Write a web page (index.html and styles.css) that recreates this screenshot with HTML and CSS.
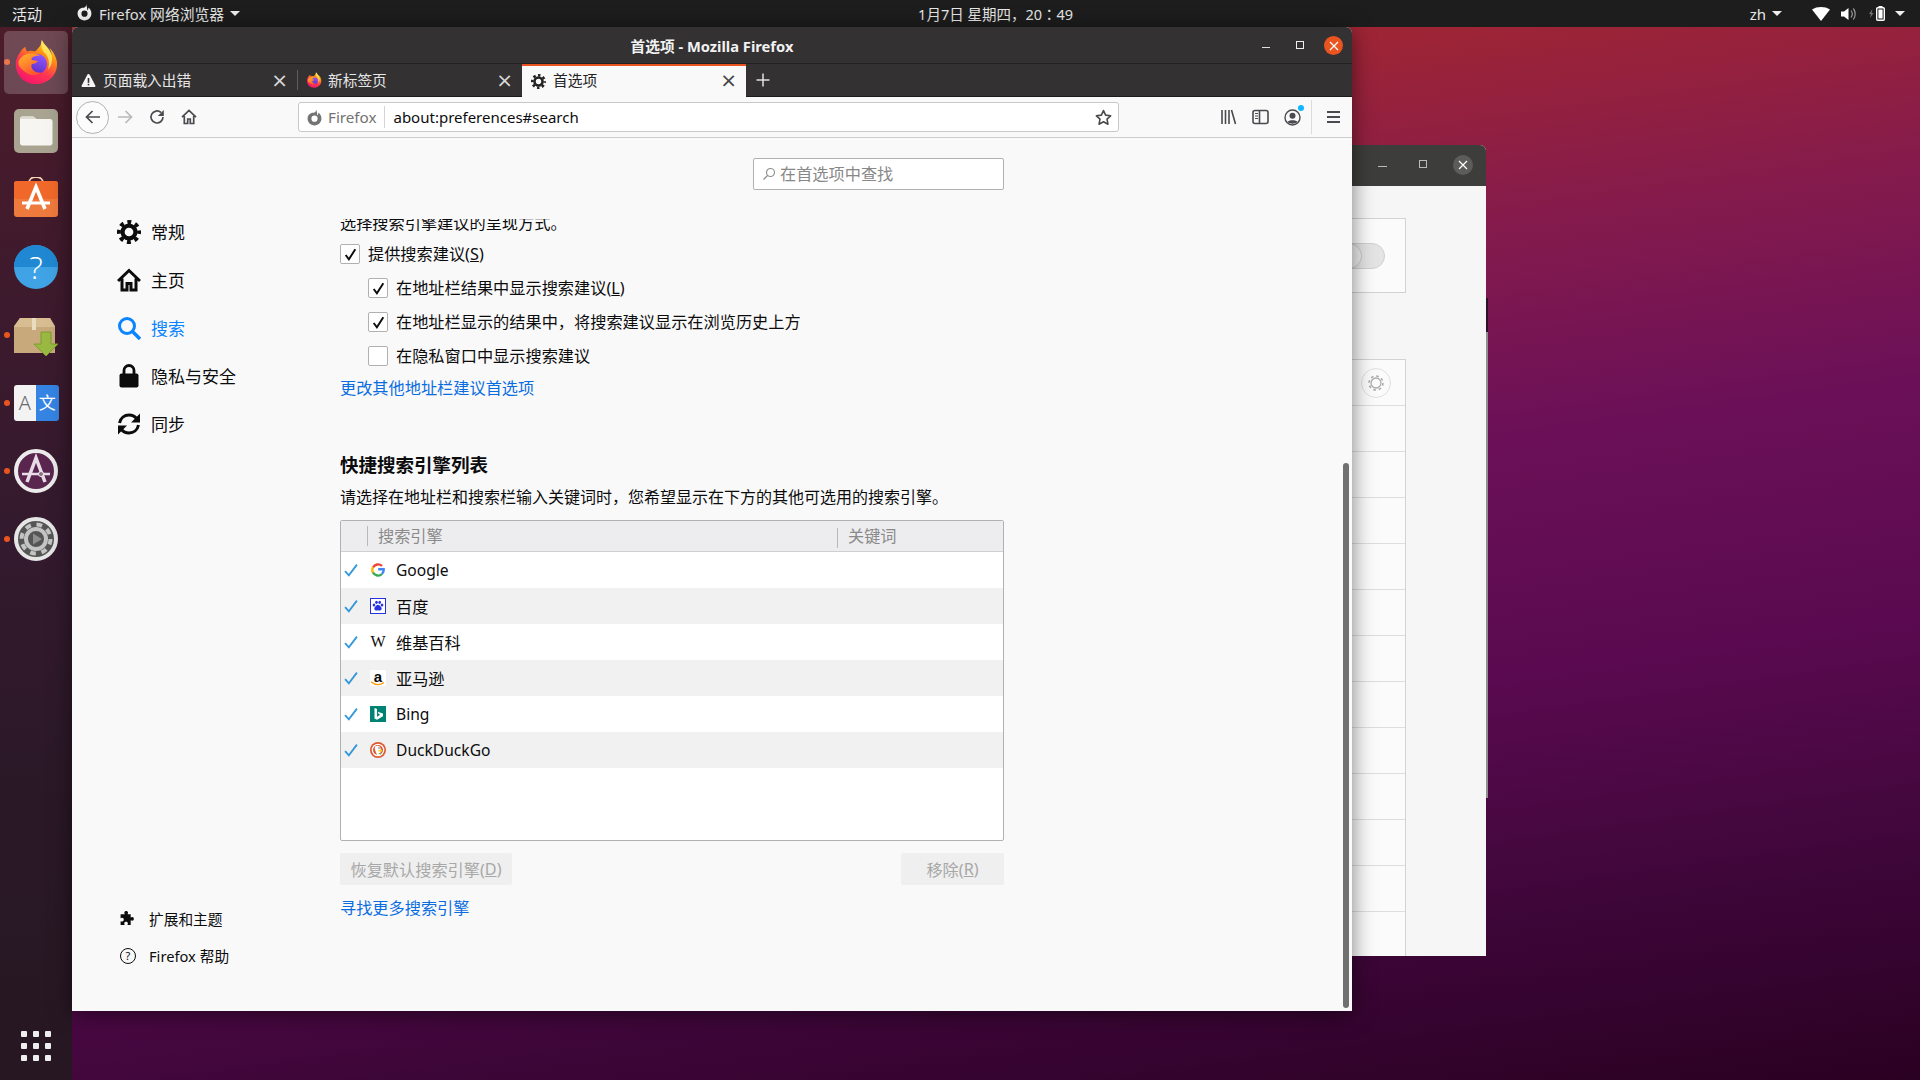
FILE: index.html
```html
<!DOCTYPE html>
<html lang="zh-CN">

<head>
    <meta charset="UTF-8">
    <title>首选项 - Mozilla Firefox</title>
    <link rel="stylesheet" href="styles.css">
</head>

<body>
    <svg class="defs" width="0" height="0">
        <defs>
            <linearGradient id="fxBody" x1="0.85" y1="0" x2="0.3" y2="1">
                <stop offset="0" stop-color="#fff44f" />
                <stop offset="0.3" stop-color="#ff980e" />
                <stop offset="0.65" stop-color="#ff3750" />
                <stop offset="1" stop-color="#f5156c" />
            </linearGradient>
            <linearGradient id="fxGlobe" x1="0.7" y1="0" x2="0.3" y2="1">
                <stop offset="0" stop-color="#9059ff" />
                <stop offset="1" stop-color="#5b2cc4" />
            </linearGradient>
            <linearGradient id="fxFold" x1="0.2" y1="0" x2="0.8" y2="1">
                <stop offset="0" stop-color="#ffb02a" />
                <stop offset="1" stop-color="#ff4a2e" />
            </linearGradient>
            <symbol id="fxLogo" viewBox="0 0 48 48">
                <path fill="url(#fxBody)" d="M44 18c-1-3-3-6-6-9 1.500 3 2.500 6 2.500 8C38 10 33 7 30 1c0 6-4 9-7 12-3-1-6-1-8 0-1-1-2-2-2-5-3 2-5 5-5 5C5 17 3 21 3 26c0 12 9 21 21 21s22-9 22-21c0-3-1-6-2-8z" />
                <circle cx="25" cy="26" r="10.500" fill="url(#fxGlobe)" />
                <path fill="#fff36e" opacity=".75" d="M30 1c3 6 9 9 10.500 16 1 5 0 11-4 15 2-7 1-13-3-17-3-3-5-8-3.500-14z" />
                <path fill="url(#fxFold)" d="M6 23c2-5 7-8 13-8 4 0 8 1 10 3-3-1-7 0-9 1.500-1 1-1 2 0 2.500l6 1c-1 2-4 3-6 3-1 0-1 3 0 5 2 3 6 5 11 4-7 4-15 3-20-2-4-3-6-6-5-10z" />
            </symbol>
            <symbol id="gear" viewBox="0 0 16 16">
                <circle cx="8" cy="8" r="4.300" fill="none" stroke="currentColor" stroke-width="2.800" />
                <circle cx="8" cy="8" r="6.700" fill="none" stroke="currentColor" stroke-width="2.600" stroke-dasharray="2.630 2.630" stroke-dashoffset="1.300" />
            </symbol>
            <symbol id="fxMono" viewBox="0 0 16 16">
                <path fill="currentColor" d="M9.500 0c.5 2-1 3-2 3.600C4 3.300 1.500 5.800 1.500 9c0 3.600 2.900 6.500 6.500 6.500s6.500-2.900 6.500-6.500c0-2.500-1.200-4.500-3-5.600.3 1.400-.1 2.300-.7 2.700C10.600 4 10 2 9.500 0zM8 6.200A2.900 2.900 0 1 1 8 12a2.900 2.900 0 0 1 0-5.800z" />
            </symbol>
            <symbol id="okMark" viewBox="0 0 14 14">
                <path fill="none" stroke="#0c0c0d" stroke-width="1.800" d="M2.500 7.500 5.500 11.500 11.500 2" />
            </symbol>
            <symbol id="tickMark" viewBox="0 0 13 13">
                <path fill="none" stroke="#3498db" stroke-width="1.700" d="M1 7.500 4.500 11.500 12 1.500" />
            </symbol>
        </defs>
    </svg>

    <header class="topbar">
        <span class="activities">活动</span>
        <svg class="app-icon"><use href="#fxMono" /></svg>
        <span class="app-name">Firefox 网络浏览器</span>
        <i class="caret"></i>
        <span class="clock">1月7日 星期四，20<span class="colon" lang="zh-TW">：</span>49</span>
        <div class="status">
            <span class="lang">zh</span>
            <i class="caret"></i>
            <svg class="wifi" width="18" height="14" viewBox="0 0 18 14"><path fill="#fff" d="M0 2.500C5-.8 13-.8 18 2.500L9 14z" /></svg>
            <svg class="volume" width="15" height="14" viewBox="0 0 15 14"><path fill="#fff" d="M0 4.500h3L7.500 1v12L3 9.500H0z" /><path fill="none" stroke="#999" stroke-width="1.200" d="M10 3.500c1.500 2 1.500 5 0 7M12.300 1.500c2.500 3 2.500 8 0 11" /></svg>
            <svg class="battery" width="16" height="15" viewBox="0 0 16 15"><path fill="#777" d="M3.500 3 0 8h2l-1 4 3.500-5h-2z" /><rect x="7.700" y="1.700" width="7.600" height="12.600" rx="1" fill="none" stroke="#fff" stroke-width="1.400" /><rect x="9.500" y="0" width="4" height="2" fill="#fff" /><rect x="9.400" y="3.500" width="4.200" height="9" fill="#fff" /></svg>
            <i class="caret caret-end"></i>
        </div>
    </header>

    <nav class="dock">
        <div class="dock-item running active"><svg width="46" height="46"><use href="#fxLogo" /></svg></div>
        <div class="dock-item">
            <svg width="44" height="44" viewBox="0 0 44 44">
                <rect x="0" y="0" width="44" height="44" rx="5" fill="#a8a491" />
                <path fill="#f7f5f1" d="M6 10c0-1.500 1-2.500 2.500-2.500h10c1.500 0 2.500 1.500 4 2.500H36c1.500 0 2.500 1 2.500 2.500V34c0 1.500-1 2.500-2.500 2.500H8.500C7 36.500 6 35.500 6 34z" />
                <path fill="#dedbd3" d="M6 10c0-1.500 1-2.500 2.500-2.500h10c1.500 0 2.500 1.500 4 2.500z" />
            </svg>
        </div>
        <div class="dock-item">
            <svg width="44" height="44" viewBox="0 0 44 44">
                <path fill="none" stroke="#f6d3b5" stroke-width="1.800" d="M15 6c0-8 14-8 14 0" />
                <rect x="0" y="4" width="44" height="36" rx="3" fill="#ef7a3d" />
                <rect x="0" y="4" width="44" height="18" rx="3" fill="#f0692a" />
                <path fill="none" stroke="#fff" stroke-width="3.600" d="M13 32 22 10l9 22" />
                <path fill="none" stroke="#fff" stroke-width="3" d="M8 26h28" />
            </svg>
        </div>
        <div class="dock-item">
            <svg width="44" height="44" viewBox="0 0 44 44">
                <circle cx="22" cy="22" r="22" fill="#3fa3e5" />
                <path fill="#2088d2" d="M0 22a22 22 0 0 1 44 0z" />
                <text class="help-mark" x="22" y="34" text-anchor="middle">?</text>
            </svg>
        </div>
        <div class="dock-item running">
            <svg width="46" height="44" viewBox="0 0 46 44">
                <g transform="translate(0 3)">
                    <path fill="#c7a97c" d="M1 37V10l6-8h30l5 8v27z" />
                    <path fill="#d8bd92" d="M1 11l6-9h30l5 9z" />
                    <rect x="19" y="2" width="4" height="12" fill="#eadcc0" />
                    <path fill="#99b943" stroke="#7d9c2f" d="M28 16h10v12h7L33 40 21 28h7z" />
                </g>
            </svg>
        </div>
        <div class="dock-item running">
            <div class="translate">
                <span class="tr-a">A</span>
                <span class="tr-b">文</span>
            </div>
        </div>
        <div class="dock-item running">
            <svg width="44" height="44" viewBox="0 0 44 44">
                <circle cx="22" cy="22" r="20" fill="#5a2650" stroke="#ececec" stroke-width="4" />
                <path fill="none" stroke="#e8dce6" stroke-width="3.500" d="M13 33 22 9l9 24" />
                <path fill="none" stroke="#e8dce6" stroke-width="2.500" d="M8 25h28" />
                <circle cx="27" cy="25" r="2.500" fill="#8a6a86" stroke="#eee" />
            </svg>
        </div>
        <div class="dock-item running">
            <svg width="44" height="44" viewBox="0 0 44 44">
                <circle cx="22" cy="22" r="20" fill="#555" stroke="#e6e6e6" stroke-width="4" />
                <circle cx="22" cy="22" r="10" fill="none" stroke="#c4c4c4" stroke-width="4" />
                <circle cx="22" cy="22" r="14.500" fill="none" stroke="#c4c4c4" stroke-width="4" stroke-dasharray="5.700 5.700" />
                <path fill="#8e8e8e" d="M19 16.500 28 22l-9 5.500z" />
            </svg>
        </div>
        <div class="dock-apps">
            <i></i><i></i><i></i><i></i><i></i><i></i><i></i><i></i><i></i>
        </div>
    </nav>

    <section class="bg-window">
        <div class="bg-title">
            <span class="ctl-min"></span>
            <span class="ctl-max"></span>
            <span class="ctl-close">
                <svg width="10" height="10" viewBox="0 0 10 10"><path stroke="#fff" stroke-width="1.200" d="M1 1l8 8M9 1 1 9" /></svg>
            </span>
        </div>
        <div class="bg-body">
            <div class="bg-panel bg-switch-panel">
                <div class="bg-switch"><i></i></div>
            </div>
            <div class="bg-panel bg-list">
                <div class="bg-row bg-row-head">
                    <span class="bg-gear">
                        <svg width="18" height="18" viewBox="0 0 18 18"><circle cx="9" cy="9" r="5" fill="none" stroke="#adadad" stroke-width="1.300" /><circle cx="9" cy="9" r="7" fill="none" stroke="#adadad" stroke-width="1.600" stroke-dasharray="2.700 2.800" /></svg>
                    </span>
                </div>
                <div class="bg-row"></div>
                <div class="bg-row"></div>
                <div class="bg-row"></div>
                <div class="bg-row"></div>
                <div class="bg-row"></div>
                <div class="bg-row"></div>
                <div class="bg-row"></div>
                <div class="bg-row"></div>
                <div class="bg-row"></div>
                <div class="bg-row"></div>
                <div class="bg-row"></div>
                <div class="bg-row"></div>
            </div>
        </div>
    </section>
    <div class="bg-edge"></div>

    <main class="ff-window">
        <div class="ff-title">
            <span class="ff-title-text">首选项 - Mozilla Firefox</span>
            <div class="ff-controls">
                <span class="ff-min"></span>
                <span class="ff-max"></span>
                <span class="ff-close">
                    <svg width="10" height="10" viewBox="0 0 10 10"><path stroke="#fff" stroke-width="1.200" d="M1 1l8 8M9 1 1 9" /></svg>
                </span>
            </div>
        </div>

        <div class="tabs">
            <div class="tab">
                <svg class="tab-icon" width="15" height="15" viewBox="0 0 15 15"><path fill="#f5f5f5" d="M7.500 1c.5 0 .9.300 1.200.800l5.600 10.700c.4.800-.1 1.500-1 1.500H1.700c-.9 0-1.400-.7-1-1.500L6.300 1.800C6.600 1.300 7 1 7.500 1z" /><rect x="6.700" y="5" width="1.600" height="4.800" fill="#333" /><rect x="6.700" y="10.800" width="1.600" height="1.600" fill="#333" /></svg>
                <span class="tab-label">页面载入出错</span>
                <span class="tab-close">×</span>
            </div>
            <div class="tab tab-second">
                <svg class="tab-icon" width="16" height="16"><use href="#fxLogo" /></svg>
                <span class="tab-label">新标签页</span>
                <span class="tab-close">×</span>
            </div>
            <div class="tab tab-active">
                <svg class="tab-icon" width="15" height="15"><use href="#gear" /></svg>
                <span class="tab-label">首选项</span>
                <span class="tab-close">×</span>
            </div>
            <svg class="tab-new" width="34" height="32" viewBox="0 0 32 32"><path stroke="#e0e0e0" stroke-width="1.500" d="M16 9.500v13M9.500 16h13" /></svg>
        </div>

        <div class="toolbar">
            <span class="tool-back">
                <svg width="18" height="18" viewBox="0 0 18 18"><path fill="none" stroke="#4a4a4f" stroke-width="1.700" d="M16 9H3M8.500 3 2.500 9l6 6" /></svg>
            </span>
            <span class="tool-btn">
                <svg width="18" height="18" viewBox="0 0 18 18"><path fill="none" stroke="#b9b9bb" stroke-width="1.700" d="M2 9h13M9.500 3l6 6-6 6" /></svg>
            </span>
            <span class="tool-btn">
                <svg width="16" height="16" viewBox="0 0 16 16"><path fill="none" stroke="#4a4a4f" stroke-width="1.700" d="M14 8a6 6 0 1 1-2-4.500" /><path fill="#4a4a4f" d="M14.800 1v6h-6z" /></svg>
            </span>
            <span class="tool-btn">
                <svg width="16" height="16" viewBox="0 0 16 16"><path fill="none" stroke="#4a4a4f" stroke-width="1.700" d="M1 8.200 8 1.500l7 6.700M3.300 7v7.500h3.400V10h2.600v4.500h3.400V7" /></svg>
            </span>
            <div class="urlbar">
                <span class="identity">
                    <svg width="17" height="17"><use href="#fxMono" /></svg>
                    Firefox
                </span>
                <span class="url">about:preferences#search</span>
                <svg class="star" width="17" height="17" viewBox="0 0 16 16"><path fill="none" stroke="#4a4a4f" stroke-width="1.500" stroke-linejoin="round" d="M8 1.500l2 4.300 4.700.6-3.400 3.200.9 4.700L8 12l-4.200 2.300.9-4.700L1.300 6.400 6 5.800z" /></svg>
            </div>
            <span class="tool-btn tool-library">
                <svg width="17" height="16" viewBox="0 0 17 16"><path stroke="#4a4a4f" stroke-width="1.600" d="M2 1v14M5.500 1v14M9 1v14M11.500 1l4 14" /></svg>
            </span>
            <span class="tool-btn">
                <svg width="17" height="16" viewBox="0 0 17 16"><rect x="1" y="1.500" width="15" height="13" rx="2" fill="none" stroke="#4a4a4f" stroke-width="1.600" /><path stroke="#4a4a4f" stroke-width="1.600" d="M7.500 1.500v13" /><path stroke="#4a4a4f" d="M3 4.500h3M3 7h3M3 9.500h3" /></svg>
            </span>
            <span class="tool-btn tool-account">
                <svg width="17" height="17" viewBox="0 0 17 17"><circle cx="8.500" cy="8.500" r="7.500" fill="none" stroke="#4a4a4f" stroke-width="1.400" /><circle cx="8.500" cy="6.800" r="3" fill="#4a4a4f" /><path fill="#4a4a4f" d="M3.500 13c1-2.500 9-2.500 10 0-2.500 2.200-7.500 2.200-10 0z" /></svg>
                <i class="account-dot"></i>
            </span>
            <span class="tool-sep"></span>
            <span class="tool-btn tool-menu"><i></i><i></i><i></i></span>
        </div>

        <div class="prefs">
            <aside class="side">
                <div class="side-main">
                    <div class="side-item">
                        <svg class="side-icon"><use href="#gear" /></svg>
                        <span>常规</span>
                    </div>
                    <div class="side-item">
                        <svg class="side-icon" viewBox="0 0 24 24"><path fill="none" stroke="#0c0c0d" stroke-width="3" d="M1 13 12 2.500 23 13M5 10.500v11.500h5v-6.500h4V22h5V10.500" /></svg>
                        <span>主页</span>
                    </div>
                    <div class="side-item side-current">
                        <svg class="side-icon" viewBox="0 0 24 24"><circle cx="10" cy="10" r="7.500" fill="none" stroke="#0a84ff" stroke-width="3" /><path stroke="#0a84ff" stroke-width="3.400" d="M15.500 15.500l7.500 7.500" /></svg>
                        <span>搜索</span>
                    </div>
                    <div class="side-item">
                        <svg class="side-icon" viewBox="0 0 24 24"><path fill="none" stroke="#0c0c0d" stroke-width="2.800" d="M7 11V6.500a5 5 0 0 1 10 0V11" /><rect x="2.500" y="9.500" width="19" height="14" rx="2" fill="#0c0c0d" /></svg>
                        <span>隐私与安全</span>
                    </div>
                    <div class="side-item">
                        <svg class="side-icon" viewBox="0 0 24 24"><path fill="none" stroke="#0c0c0d" stroke-width="3" d="M2.500 11C3.500 6 7.500 3 12 3c3.200 0 6 1.500 7.500 3.500M21.500 13c-1 5-5 8-9.500 8-3.200 0-6-1.500-7.500-3.500" /><path fill="#0c0c0d" d="M23 1.500v9h-9zM1 22.500v-9h9z" /></svg>
                        <span>同步</span>
                    </div>
                </div>
                <div class="side-foot">
                    <div class="foot-item">
                        <svg width="16" height="16" viewBox="0 0 16 16"><path fill="#0c0c0d" d="M5 2.500c0-2 3.500-2 3.500 0 0 .6-.4 1-.4 1.500H11v3c.5 0 .9-.4 1.500-.4 2 0 2 3.500 0 3.500-.6 0-1-.4-1.500-.4V14H8c0-.5.4-.9.400-1.500 0-2-3.500-2-3.500 0 0 .6.400 1 .400 1.500H1.500v-3.500c.5 0 .9.400 1.500.4 2 0 2-3.500 0-3.500-.6 0-1 .4-1.500.4V4h3.900c0-.5-.4-.9-.4-1.500z" /></svg>
                        <span>扩展和主题</span>
                    </div>
                    <div class="foot-item">
                        <span class="help-ring">?</span>
                        <span>Firefox 帮助</span>
                    </div>
                </div>
            </aside>

            <div class="pane">
                <div class="pref-search">
                    <svg width="14" height="14" viewBox="0 0 14 14"><circle cx="8.500" cy="5.500" r="4" fill="none" stroke="#8f8f8f" stroke-width="1.200" /><path stroke="#8f8f8f" stroke-width="1.200" d="M5.500 8.500 1.500 12.500" /></svg>
                    <span>在首选项中查找</span>
                </div>

                <div class="pane-scroll">
                    <p class="clipped-line">选择搜索引擎建议的呈现方式。</p>

                    <label class="check-row">
                        <span class="box"><svg width="15" height="15"><use href="#okMark" /></svg></span>
                        <span class="check-text">提供搜索建议(<u>S</u>)</span>
                    </label>
                    <label class="check-row indent">
                        <span class="box"><svg width="15" height="15"><use href="#okMark" /></svg></span>
                        <span class="check-text">在地址栏结果中显示搜索建议(<u>L</u>)</span>
                    </label>
                    <label class="check-row indent">
                        <span class="box"><svg width="15" height="15"><use href="#okMark" /></svg></span>
                        <span class="check-text">在地址栏显示的结果中，将搜索建议显示在浏览历史上方</span>
                    </label>
                    <label class="check-row indent">
                        <span class="box"></span>
                        <span class="check-text">在隐私窗口中显示搜索建议</span>
                    </label>

                    <a class="link link-first">更改其他地址栏建议首选项</a>

                    <h2 class="engines-title">快捷搜索引擎列表</h2>
                    <p class="engines-desc">请选择在地址栏和搜索栏输入关键词时，您希望显示在下方的其他可选用的搜索引擎。</p>

                    <div class="engines">
                        <div class="engines-head">
                            <span class="col-name">搜索引擎</span>
                            <span class="col-key">关键词</span>
                        </div>
                        <div class="engine">
                            <svg class="tick" width="14" height="14"><use href="#tickMark" /></svg>
                            <svg class="fav" width="16" height="16" viewBox="0 0 16 16">
                                <path fill="none" stroke="#ea4335" stroke-width="2.400" d="M3 5.500A5.700 5.700 0 0 1 12 4" />
                                <path fill="none" stroke="#fbbc05" stroke-width="2.400" d="M3 5.200a5.700 5.700 0 0 0 0 5.600" />
                                <path fill="none" stroke="#34a853" stroke-width="2.400" d="M3 10.500a5.700 5.700 0 0 0 9 1.500" />
                                <path fill="none" stroke="#4285f4" stroke-width="2.400" d="M12 12a5.700 5.700 0 0 0 1.700-4.800H8.200" />
                            </svg>
                            <span class="latin">Google</span>
                        </div>
                        <div class="engine">
                            <svg class="tick" width="14" height="14"><use href="#tickMark" /></svg>
                            <svg class="fav" width="16" height="16" viewBox="0 0 16 16">
                                <rect x=".5" y=".5" width="15" height="15" fill="#fff" stroke="#2932e1" />
                                <g fill="#2932e1">
                                    <ellipse cx="4" cy="7" rx="1.300" ry="1.600" />
                                    <ellipse cx="6.500" cy="4.300" rx="1.300" ry="1.600" />
                                    <ellipse cx="9.700" cy="4.300" rx="1.300" ry="1.600" />
                                    <ellipse cx="12" cy="7" rx="1.300" ry="1.600" />
                                    <path d="M8 6.800c1.500 0 2 1.300 3 2.300 1 1 1 3.400-1 3.400-.8 0-1.300-.3-2-.3s-1.200.3-2 .3c-2 0-2-2.400-1-3.400s1.500-2.300 3-2.300z" />
                                </g>
                            </svg>
                            <span class="cjk">百度</span>
                        </div>
                        <div class="engine">
                            <svg class="tick" width="14" height="14"><use href="#tickMark" /></svg>
                            <span class="fav fav-w">W</span>
                            <span class="cjk">维基百科</span>
                        </div>
                        <div class="engine">
                            <svg class="tick" width="14" height="14"><use href="#tickMark" /></svg>
                            <span class="fav fav-a">a
                                <svg width="16" height="5" viewBox="0 0 16 5"><path fill="none" stroke="#f90" stroke-width="1.300" d="M1 .8c4 3.400 9 3.400 13 .8" /></svg>
                            </span>
                            <span class="cjk">亚马逊</span>
                        </div>
                        <div class="engine">
                            <svg class="tick" width="14" height="14"><use href="#tickMark" /></svg>
                            <svg class="fav" width="16" height="16" viewBox="0 0 16 16">
                                <rect width="16" height="16" fill="#008373" />
                                <path fill="#fff" d="M4.500 2 7 2.900v7.800l3.200-1.900-1.500-.7-1-2.400 5.300 1.900v2.700L7 13.800l-2.500-1.400z" />
                            </svg>
                            <span class="latin">Bing</span>
                        </div>
                        <div class="engine">
                            <svg class="tick" width="14" height="14"><use href="#tickMark" /></svg>
                            <svg class="fav" width="16" height="16" viewBox="0 0 16 16">
                                <circle cx="8" cy="8" r="8" fill="#de5833" />
                                <circle cx="8" cy="8" r="6.300" fill="#fff" />
                                <circle cx="8" cy="8" r="5" fill="#de5833" />
                                <path fill="#fff" d="M5 4.500c2-1.500 5-1 5.500 1.500.3 2 .5 4-.5 7H7c-1-3-3-6-2-8.500z" />
                                <path fill="#fdd20a" d="M8 8.500l4-1v2.300l-4-.5z" />
                                <path fill="#65bc46" d="M8 11.500l3-1v2.300z" />
                                <circle cx="9" cy="6" r=".7" fill="#2d4f8e" />
                            </svg>
                            <span class="latin">DuckDuckGo</span>
                        </div>
                    </div>

                    <div class="engine-actions">
                        <span class="btn-off btn-restore">恢复默认搜索引擎(<u>D</u>)</span>
                        <span class="btn-off btn-remove">移除(<u>R</u>)</span>
                    </div>

                    <a class="link link-more">寻找更多搜索引擎</a>
                </div>
            </div>

            <div class="scrollbar"></div>
        </div>
    </main>
</body>

</html>
```

FILE: styles.css
```css
* {
    box-sizing: border-box;
}

html,
body {
    margin: 0;
    height: 100%;
}

body {
    position: relative;
    width: 1920px;
    height: 1080px;
    overflow: hidden;
    font-family: "Noto Sans", "Noto Sans CJK SC", sans-serif;
    font-size: 16.200px;
    color: #0c0c0d;
    background: linear-gradient(172deg, #b32e28 2%, #9c2436 18%, #851b4c 32%, #6b1058 48%, #5a0a50 66%, #3d0638 84%, #2a0022 100%);
}

.defs {
    position: absolute;
}

/* top bar */
.topbar {
    display: flex;
    align-items: center;
    height: 27px;
    background: #1d1d1d;
    color: #e8e8e8;
    font-size: 15px;
}

.activities {
    margin-left: 12px;
}

.app-icon {
    width: 17px;
    height: 17px;
    margin-left: 34px;
    margin-top: -3px;
    color: #f2f2f2;
}

.app-name {
    margin-left: 6px;
    font-size: 14.800px;
}

.caret {
    width: 0;
    height: 0;
    margin-left: 6px;
    border-left: 5px solid transparent;
    border-right: 5px solid transparent;
    border-top: 5px solid #eee;
}

.clock {
    margin-left: 678px;
    font-size: 14.500px;
}

.colon {
    font-family: "Noto Sans CJK TC", sans-serif;
}

.status {
    display: flex;
    align-items: center;
    margin-left: auto;
    padding-right: 15px;
}

.lang {
    font-size: 15px;
}

.wifi {
    margin-left: 30px;
}

.volume {
    margin-left: 11px;
}

.battery {
    margin-left: 13px;
}

.caret-end {
    margin-left: 10px;
}

/* dock */
.dock {
    position: absolute;
    left: 0;
    top: 27px;
    bottom: 0;
    width: 72px;
    padding-top: 1px;
    display: flex;
    flex-direction: column;
    background: linear-gradient(180deg, #4c1c2a 0%, #3e1a2d 25%, #331a2e 50%, #2a1826 75%, #261722 100%);
}

.dock-item {
    position: relative;
    display: flex;
    align-items: center;
    justify-content: center;
    width: 72px;
    height: 68px;
}

.dock-item:first-child {
    margin-bottom: 1px;
}

.dock-item.running::before {
    content: "";
    position: absolute;
    left: 4px;
    top: 31px;
    width: 6px;
    height: 6px;
    border-radius: 50%;
    background: #e95420;
}

.dock-item.active::after {
    content: "";
    position: absolute;
    left: 4px;
    right: 4px;
    top: 3px;
    bottom: 2px;
    border-radius: 5px;
    background: rgba(255, 255, 255, .2);
}

.dock-item.active svg {
    position: relative;
    z-index: 1;
}

.help-mark {
    font-family: "Open Sans", sans-serif;
    font-size: 32px;
    font-weight: 300;
    fill: #fff;
}

.translate {
    display: grid;
    grid-template-columns: 1fr 1fr;
    width: 45px;
    height: 36px;
    border-radius: 3px;
    overflow: hidden;
    font-size: 20px;
    line-height: 36px;
    text-align: center;
}

.tr-a {
    background: #f3f3f3;
    color: #6a6a6a;
    font-weight: 300;
}

.tr-b {
    background: #3584e4;
    color: #fff;
    font-size: 17px;
}

.dock-apps {
    display: grid;
    grid-template-columns: repeat(3, 6px);
    gap: 6px;
    margin-top: auto;
    margin-bottom: 19px;
    margin-left: 21px;
}

.dock-apps i {
    width: 6px;
    height: 6px;
    border-radius: 1px;
    background: #eee;
}

/* window behind */
.bg-window {
    position: absolute;
    left: 1300px;
    top: 145px;
    width: 186px;
    height: 811px;
    display: flex;
    flex-direction: column;
    border-radius: 6px 6px 0 0;
    overflow: hidden;
    background: #f6f6f6;
}

.bg-title {
    position: relative;
    flex: none;
    height: 41px;
    background: #3d3d3b;
}

.ctl-min {
    position: absolute;
    left: 78px;
    top: 21px;
    width: 9px;
    height: 1px;
    background: #bbb;
}

.ctl-max {
    position: absolute;
    left: 119px;
    top: 15px;
    width: 8px;
    height: 8px;
    border: 1px solid #bbb;
}

.ctl-close {
    position: absolute;
    left: 153px;
    top: 10px;
    width: 20px;
    height: 20px;
    border-radius: 50%;
    display: flex;
    align-items: center;
    justify-content: center;
    background: #5c5c5b;
}

.bg-body {
    flex: 1;
    min-height: 0;
    padding: 32px 80px 0 0;
    display: flex;
    flex-direction: column;
}

.bg-panel {
    border: 1px solid #d2d2d2;
    border-left: 0;
    background: #fbfbfb;
}

.bg-switch-panel {
    flex: none;
    display: flex;
    align-items: center;
    justify-content: flex-end;
    height: 75px;
    padding-right: 20px;
}

.bg-switch {
    position: relative;
    width: 50px;
    height: 26px;
    border-radius: 13px;
    background: #e4e4e4;
    border: 1px solid #d0d0d0;
}

.bg-switch i {
    position: absolute;
    left: 0;
    top: -1px;
    width: 26px;
    height: 26px;
    border-radius: 50%;
    background: #eee;
    border: 1px solid #c9c9c9;
}

.bg-list {
    flex: 1;
    min-height: 0;
    margin-top: 66px;
    border-bottom: 0;
    overflow: hidden;
}

.bg-row {
    height: 46px;
    border-bottom: 1px solid #dedede;
}

.bg-row:last-child {
    border-bottom: 0;
}

.bg-row-head {
    display: flex;
    align-items: center;
    justify-content: flex-end;
    padding-right: 14px;
}

.bg-gear {
    display: flex;
    align-items: center;
    justify-content: center;
    width: 30px;
    height: 30px;
    border-radius: 50%;
    border: 1px solid #e0e0e0;
}

.bg-edge {
    position: absolute;
    left: 1486px;
    top: 298px;
    width: 2px;
    height: 500px;
    background: linear-gradient(#2c1128 0, #2c1128 34px, #8f8f8f 34px);
}

/* firefox window */
.ff-window {
    position: absolute;
    left: 72px;
    top: 27px;
    width: 1280px;
    height: 984px;
    display: flex;
    flex-direction: column;
    border-radius: 6px 6px 0 0;
    overflow: hidden;
    background: #f9f9fa;
    box-shadow: 0 3px 22px rgba(0, 0, 0, .5);
}

.ff-title {
    position: relative;
    flex: none;
    height: 37px;
    display: flex;
    align-items: center;
    justify-content: center;
    background: #333132;
    border-bottom: 1px solid #232222;
    color: #f2f2f2;
    font-size: 14.700px;
    font-weight: 700;
}

.ff-controls {
    position: absolute;
    left: 0;
    top: 0;
    width: 100%;
    height: 36px;
}

.ff-min {
    position: absolute;
    left: 1190px;
    top: 20px;
    width: 8px;
    height: 1px;
    background: #e0e0e0;
}

.ff-max {
    position: absolute;
    left: 1224px;
    top: 14px;
    width: 8px;
    height: 8px;
    border: 1px solid #eee;
}

.ff-close {
    position: absolute;
    left: 1252px;
    top: 9px;
    width: 19px;
    height: 19px;
    border-radius: 50%;
    display: flex;
    align-items: center;
    justify-content: center;
    background: #e95420;
}

.tabs {
    flex: none;
    height: 33px;
    display: flex;
    background: #333132;
    border-bottom: 1px solid #1b1b1b;
    color: #e6e6e6;
    font-size: 14.700px;
}

.tab {
    position: relative;
    display: flex;
    align-items: center;
    width: 225px;
    height: 32px;
    padding-left: 9px;
}

.tab-second::before {
    content: "";
    position: absolute;
    left: 0;
    top: 6px;
    width: 1px;
    height: 20px;
    background: #5f5f5f;
}

.tab-icon {
    flex: none;
}

.tab-label {
    margin-left: 7px;
    margin-bottom: 2px;
}

.tab-second .tab-label {
    margin-left: 6px;
}

.tab-close {
    position: absolute;
    right: 9px;
    top: 2px;
    font-family: "DejaVu Sans", sans-serif;
    font-size: 20px;
    line-height: 28px;
    color: #d8d8d8;
}

.tab-active {
    width: 224px;
    height: 33px;
    background: #f9f9fa;
    border-top: 2px solid #e95420;
    color: #222;
}

.tab-active .tab-label {
    margin-bottom: 4px;
}

.tab-active .tab-close {
    color: #444;
    top: 0;
}

.tab-active .tab-icon {
    color: #222;
}

.tab-new {
    flex: none;
}

.toolbar {
    flex: none;
    height: 41px;
    display: flex;
    align-items: center;
    padding-left: 4px;
    background: #f9f9fa;
    border-bottom: 1px solid #ccc;
    color: #4a4a4f;
}

.tool-back {
    display: flex;
    align-items: center;
    justify-content: center;
    width: 33px;
    height: 33px;
    border-radius: 50%;
    border: 1px solid #b1b1b3;
    background: #fcfcfc;
}

.tool-btn {
    position: relative;
    display: flex;
    align-items: center;
    justify-content: center;
    width: 32px;
    height: 32px;
}

.urlbar {
    display: flex;
    align-items: center;
    width: 821px;
    height: 30px;
    margin-left: 93px;
    border: 1px solid #c8c8c8;
    border-radius: 3px;
    background: #fff;
    font-size: 15.200px;
}

.identity {
    display: flex;
    align-items: center;
    gap: 5px;
    height: 22px;
    padding: 0 8px 0 7px;
    border-right: 1px solid #d4d4d4;
    color: #737373;
}

.url {
    margin-left: 8px;
    font-size: 15px;
    color: #0c0c0d;
}

.star {
    margin-left: auto;
    margin-right: 6px;
}

.tool-library {
    margin-left: 93px;
}

.account-dot {
    position: absolute;
    right: 4px;
    top: 4px;
    width: 6px;
    height: 6px;
    border-radius: 50%;
    background: #0db7ff;
}

.tool-sep {
    width: 1px;
    height: 34px;
    margin: 0 5px 0 3px;
    background: #dcdcdc;
}

.tool-menu {
    flex-direction: column;
    gap: 3px;
}

.tool-menu i {
    width: 13px;
    height: 2px;
    background: #4a4a4f;
}

/* preferences */
.prefs {
    position: relative;
    flex: 1;
    display: flex;
    min-height: 0;
}

.side {
    width: 268px;
    display: flex;
    flex-direction: column;
    justify-content: space-between;
    padding: 70px 0 37px 0;
}

.side-item {
    display: flex;
    align-items: center;
    height: 48px;
    padding-left: 45px;
    font-size: 17px;
}

.side-item span {
    margin-top: -2px;
}

.side-icon {
    flex: none;
    width: 24px;
    height: 24px;
    margin-right: 10px;
}

.side-current {
    color: #0a84ff;
}

.foot-item {
    display: flex;
    align-items: center;
    gap: 13px;
    height: 37px;
    padding-left: 47px;
    font-size: 14.700px;
}

.foot-item svg {
    width: 17px;
    height: 17px;
}

.help-ring {
    display: flex;
    align-items: center;
    justify-content: center;
    width: 16px;
    height: 16px;
    margin-left: 1px;
    border: 1px solid #0c0c0d;
    border-radius: 50%;
    font-size: 11px;
    line-height: 1;
}

.pane {
    width: 664px;
    display: flex;
    flex-direction: column;
    height: 100%;
}

.pref-search {
    flex: none;
    display: flex;
    align-items: center;
    gap: 4px;
    align-self: flex-end;
    width: 251px;
    height: 32px;
    margin-top: 20px;
    padding-left: 8px;
    border: 1px solid #b1b1b3;
    border-radius: 2px;
    background: #fff;
    color: #888;
}

.pref-search span {
    margin-top: -2px;
}

.pane-scroll {
    flex: 1;
    margin-top: 29px;
    overflow: hidden;
}

.clipped-line {
    margin: -8px 0 2px;
    line-height: 24px;
}

.check-row {
    display: flex;
    align-items: center;
    height: 34px;
}

.check-row.indent {
    padding-left: 28px;
}

.check-text {
    line-height: 24px;
}

.box {
    flex: none;
    display: flex;
    align-items: center;
    justify-content: center;
    width: 20px;
    height: 20px;
    margin-right: 8px;
    border: 1px solid #b1b1b3;
    border-radius: 2px;
    background: #fff;
}

.link {
    display: block;
    color: #0a6ddf;
    line-height: 24px;
}

.link-first {
    margin-top: 3px;
}

.engines-title {
    margin: 53px 0 0;
    font-size: 18.500px;
    font-weight: 700;
    line-height: 24px;
}

.engines-desc {
    margin: 8px 0 0;
    font-size: 16px;
    line-height: 24px;
    white-space: nowrap;
}

.engines {
    height: 321px;
    margin-top: 11px;
    border: 1px solid #b1b1b3;
    border-radius: 2px;
    background: #fff;
}

.engines-head {
    position: relative;
    display: flex;
    align-items: center;
    height: 31px;
    padding-bottom: 2px;
    background: #ededf0;
    border-bottom: 1px solid #cfcfd1;
    color: #8a8a8a;
}

.col-name {
    margin-left: 37px;
}

.col-key {
    position: absolute;
    left: 507px;
}

.col-name::before,
.col-key::before {
    content: "";
    position: absolute;
    top: 5px;
    width: 1px;
    height: 20px;
    background: #b8b8ba;
}

.col-name::before {
    left: 26px;
}

.col-key::before {
    left: -11px;
}

.engine {
    display: flex;
    align-items: center;
    height: 36px;
}

.engine:nth-child(odd) {
    background: #f1f1f1;
}

.tick {
    margin-left: 3px;
    flex: none;
}

.fav {
    flex: none;
    width: 16px;
    height: 16px;
    margin-left: 12px;
    margin-right: 10px;
}

.latin {
    font-size: 15.600px;
}

.cjk {
    margin-top: -1px;
}

.fav-w {
    font-family: "Liberation Serif", serif;
    font-size: 16px;
    line-height: 16px;
    text-align: center;
}

.fav-a {
    position: relative;
    display: block;
    background: #fff;
    border-radius: 2px;
    font-family: "Liberation Sans", sans-serif;
    font-size: 15px;
    font-weight: 700;
    line-height: 13px;
    text-align: center;
}

.fav-a svg {
    position: absolute;
    left: 0;
    bottom: 0;
}

.engine-actions {
    display: flex;
    justify-content: space-between;
    margin-top: 12px;
}

.btn-off {
    display: flex;
    align-items: center;
    justify-content: center;
    height: 32px;
    border-radius: 2px;
    background: #efefef;
    color: #a8a8a8;
}

.btn-restore {
    width: 172px;
}

.btn-remove {
    width: 103px;
}

.link-more {
    margin-top: 11px;
}

.scrollbar {
    position: absolute;
    left: 1271px;
    top: 325px;
    width: 6px;
    height: 545px;
    border-radius: 3px;
    background: #707070;
}
```
